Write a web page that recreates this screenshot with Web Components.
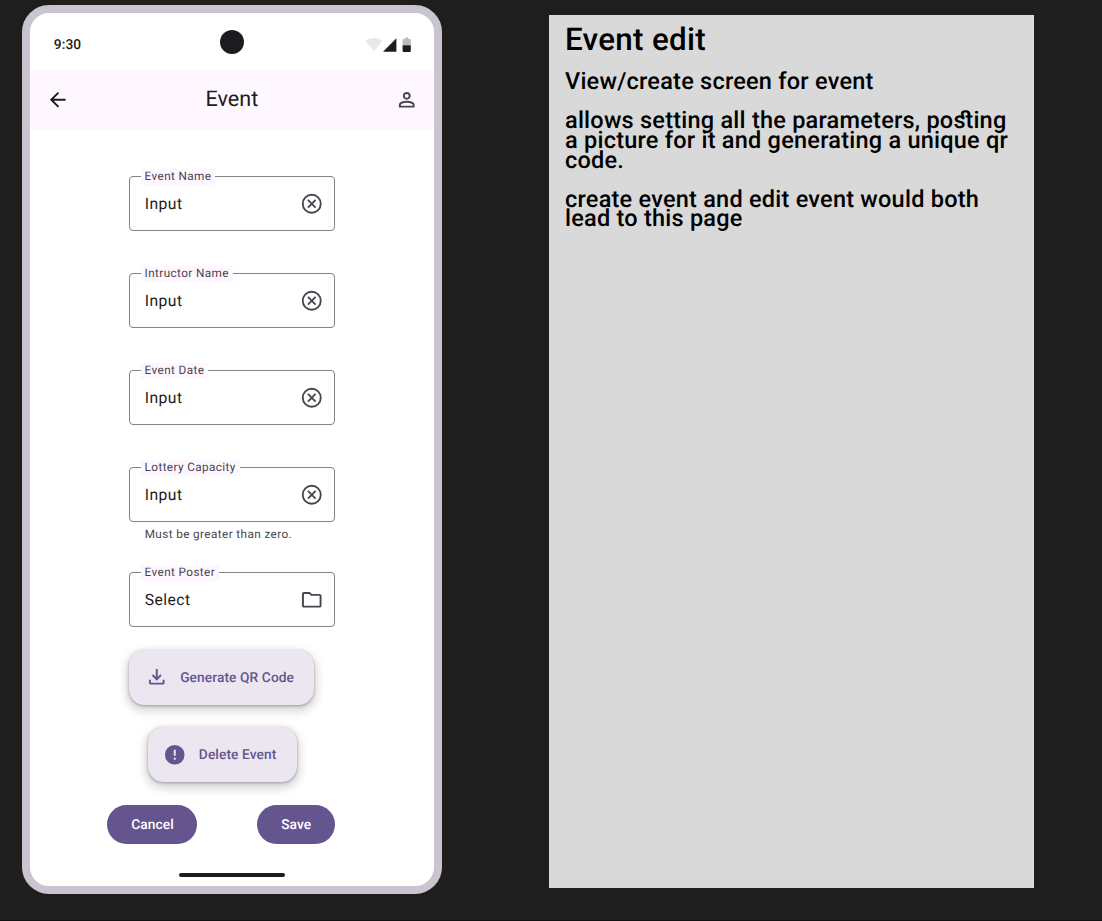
<!DOCTYPE html>
<html lang="en">
<head>
<meta charset="utf-8">
<title>Event edit</title>
<style>
html,body{margin:0;height:100%;background:#1e1e1e;overflow:hidden}
body{font-family:Roboto,"Liberation Sans",sans-serif;color:#1d1b20;text-rendering:geometricPrecision}
</style>
</head>
<body>
<design-board>
  <phone-frame>
    <status-bar></status-bar>
    <app-bar>Event</app-bar>
    <event-form>
      <outlined-field label="Event Name" value="Input" icon="clear"></outlined-field>
      <outlined-field label="Intructor Name" value="Input" icon="clear"></outlined-field>
      <outlined-field label="Event Date" value="Input" icon="clear"></outlined-field>
      <outlined-field label="Lottery Capacity" value="Input" icon="clear" hint="Must be greater than zero."></outlined-field>
      <outlined-field label="Event Poster" value="Select" icon="folder"></outlined-field>
      <fab-button slot="action" icon="download" style="width:185.4px">Generate QR Code</fab-button>
      <fab-button slot="action" icon="error" style="width:149px;margin-left:18.7px">Delete Event</fab-button>
      <pill-button slot="footer" style="width:90px">Cancel</pill-button>
      <pill-button slot="footer" style="width:77.4px">Save</pill-button>
    </event-form>
  </phone-frame>
  <note-panel>
    <span slot="title">Event edit</span>
    <note-text>View/create screen for event</note-text>
    <note-text>allows setting all the parameters, posting<br>a picture for it and generating a unique qr<br>code.</note-text>
    <note-text>create event and edit event would both<br>lead to this page</note-text>
  </note-panel>
</design-board>
<script>
const icons = {
  back: '<path d="M7.825 13 13.425 18.6 12 20 4 12 12 4 13.425 5.4 7.825 11H20V13Z"/>',
  person: '<path d="M12 12Q10.350 12 9.175 10.825 8 9.650 8 8 8 6.350 9.175 5.175 10.350 4 12 4 13.650 4 14.825 5.175 16 6.350 16 8 16 9.650 14.825 10.825 13.650 12 12 12ZM4 20V17.200Q4 16.350 4.438 15.638 4.875 14.925 5.600 14.550 7.150 13.775 8.750 13.388 10.350 13 12 13 13.650 13 15.250 13.388 16.850 13.775 18.400 14.550 19.125 14.925 19.563 15.638 20 16.350 20 17.200V20ZM6 18H18V17.200Q18 16.925 17.863 16.700 17.725 16.475 17.500 16.350 16.150 15.675 14.775 15.338 13.400 15 12 15 10.600 15 9.225 15.338 7.850 15.675 6.500 16.350 6.275 16.475 6.138 16.700 6 16.925 6 17.200ZM12 10Q12.825 10 13.413 9.413 14 8.825 14 8 14 7.175 13.413 6.588 12.825 6 12 6 11.175 6 10.588 6.588 10 7.175 10 8 10 8.825 10.588 9.413 11.175 10 12 10Z"/>',
  clear: '<circle cx="12" cy="12" r="9.200" fill="none" stroke="currentColor" stroke-width="1.900"/><path d="M8.100 8.100 15.900 15.900M15.900 8.100 8.100 15.900" fill="none" stroke="currentColor" stroke-width="1.900"/>',
  folder: '<path d="M4 20Q3.175 20 2.588 19.413 2 18.825 2 18V6Q2 5.175 2.588 4.588 3.175 4 4 4H10L12 6H20Q20.825 6 21.413 6.588 22 7.175 22 8V18Q22 18.825 21.413 19.413 20.825 20 20 20ZM4 18H20V8H11.175L9.175 6H4Z"/>',
  download: '<path d="M12 16 7 11 8.400 9.550 11 12.150V4H13V12.150L15.600 9.550 17 11ZM6 20Q5.175 20 4.588 19.413 4 18.825 4 18V15H6V18H18V15H20V18Q20 18.825 19.413 19.413 18.825 20 18 20Z"/>',
  error: '<path fill-rule="evenodd" d="M12 22A10 10 0 1 1 12 2 10 10 0 0 1 12 22ZM11 15V17H13V15ZM11 7V13H13V7Z"/>'
};
function define(name, css, html) {
  customElements.define(name, class extends HTMLElement {
    constructor() {
      super();
      const markup = typeof html === 'function' ? html(this) : html;
      this.attachShadow({mode: 'open'}).innerHTML =
        `<style>*{box-sizing:border-box}:host{display:block;box-sizing:border-box}${css}</style>${markup}`;
    }
  });
}

define('m3-icon', ':host{width:23.5px;height:23.5px;flex:none}svg{display:block;width:100%;height:100%;fill:currentColor}',
  el => `<svg viewBox="0 0 24 24">${icons[el.getAttribute('name')]}</svg>`);

define('design-board',
  ':host{display:flex;align-items:flex-start;width:1102px;height:921px;padding:5px 0 0 22.300px;background:#1e1e1e;border-bottom:1px solid #111}',
  '<slot></slot>');

define('phone-frame',
  `:host{display:flex;flex-direction:column;width:419.400px;height:889.400px;flex:none;border:8px solid #cac4d0;border-radius:27px;background:#fff;overflow:hidden}
  .nav{margin-top:auto;height:13.700px;display:flex;justify-content:center;align-items:flex-start}
  .nav i{width:106px;height:4px;border-radius:4px;background:#1d1b20}`,
  '<slot></slot><div class="nav"><i></i></div>');

define('status-bar',
  `:host{display:grid;grid-template-columns:1fr 24px 1fr;height:56px;padding:0 22.700px 0 23.500px;align-items:center;flex:none}
  .time{font-weight:500;font-size:13.720px;line-height:20px;letter-spacing:.100px;padding-top:8px}
  .cam{width:24px;height:24px;border-radius:50%;background:#1d1b20;margin-top:2px}
  svg{justify-self:end;margin-top:7px;display:block}`,
  `<span class="time">9:30</span><i class="cam"></i>
  <svg width="46" height="16" viewBox="0 0 46 16" fill="#1d1b20">
    <path opacity=".1" d="M.400 4Q4.300.900 8.900.900T17.400 4L8.900 14.300Z"/>
    <path d="M18 14.800H31.400V1.200Z"/>
    <path opacity=".3" d="M37.600 8.200V3Q37.600 2 38.600 2H40.100V.500H43.200V2H44.700Q45.800 2 45.800 3V8.200Z"/>
    <path d="M37.600 8.200H45.800V13.900Q45.800 15 44.700 15H38.600Q37.600 15 37.600 13.900Z"/>
  </svg>`);

define('app-bar',
  `:host{display:flex;align-items:center;justify-content:space-between;height:62.300px;padding:0 15.400px 0 15.700px;background:#fef7ff;flex:none}
  m3-icon{margin-top:-1px}
  .t{font-size:21.560px;line-height:28px;margin:0 .500px 0 0}
  .p{color:#49454f}`,
  '<m3-icon name="back"></m3-icon><span class="t"><slot></slot></span><m3-icon class="p" name="person"></m3-icon>');

define('event-form',
  `.fields{width:206px;margin:45.200px 0 0 98.700px}
  .actions{display:flex;flex-direction:column;gap:22.500px;margin:22.500px 0 0 98.700px}
  .footer{display:flex;justify-content:space-between;width:227.400px;margin:22.700px 0 0 77.200px}`,
  '<div class="fields"><slot></slot></div><div class="actions"><slot name="action"></slot></div><div class="footer"><slot name="footer"></slot></div>');

define('outlined-field',
  `:host{margin-bottom:42.100px;color:#49454f}
  :host([hint]){margin-bottom:30.300px}
  :host([icon=folder]){margin-bottom:0}
  .box{position:relative;display:flex;align-items:center;height:54.900px;border:1px solid #85818a;border-radius:4px;padding:0 10.800px 0 14.700px}
  .label{position:absolute;left:10.700px;top:-8.300px;height:15.700px;padding:0 3.920px;background:#fef7ff;font-size:11.760px;line-height:15.700px;letter-spacing:.392px;white-space:nowrap}
  .value{flex:1;font-size:15.680px;line-height:23.500px;letter-spacing:.490px;color:#1d1b20}
  .hint{padding:4.500px 15.700px 0;font-size:11.760px;line-height:15.700px;letter-spacing:.392px;height:19.600px;white-space:nowrap}`,
  el => `<div class="box"><span class="label">${el.getAttribute('label')}</span><span class="value">${el.getAttribute('value')}</span><m3-icon name="${el.getAttribute('icon')}"></m3-icon></div>${el.hasAttribute('hint') ? `<div class="hint">${el.getAttribute('hint')}</div>` : ''}`);

define('fab-button',
  `:host{display:flex;align-items:center;gap:12px;height:54.900px;padding-left:15.700px;border-radius:15.700px;background:#ece6f0;color:#65558f;font-weight:500;font-size:13.720px;line-height:20px;letter-spacing:.098px;white-space:nowrap;box-shadow:0 1px 3px rgba(0,0,0,.300),0 4px 8px 3px rgba(0,0,0,.150)}
  span{padding-top:1.400px}`,
  el => `<m3-icon name="${el.getAttribute('icon')}"></m3-icon><span><slot></slot></span>`);

define('pill-button',
  `:host{display:flex;align-items:center;justify-content:center;height:39px;padding-top:1.600px;border-radius:98px;background:#65558f;color:#fff;font-weight:500;font-size:13.720px;letter-spacing:.098px}`,
  '<slot></slot>');

define('note-panel',
  `:host{width:485px;height:873.700px;margin:9.700px 0 0 107.500px;padding:15.600px 15.800px;background:#d9d9d9;color:#000;font-weight:500;flex:none}
  .title{font-size:31.360px;line-height:20px;letter-spacing:.300px;margin-bottom:21.900px}`,
  '<div class="title"><slot name="title"></slot></div><slot></slot>');

define('note-text',
  `:host{font-size:23.520px;line-height:19.600px;letter-spacing:.230px;margin-bottom:19.600px;white-space:nowrap;font-feature-settings:"dlig" 1}`,
  '<slot></slot>');
</script>
</body>
</html>
